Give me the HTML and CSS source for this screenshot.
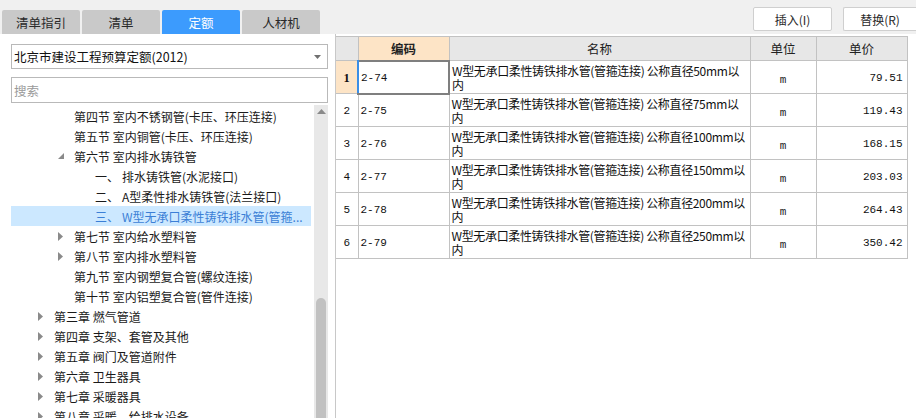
FILE: index.html
```html
<!DOCTYPE html>
<html lang="zh-CN">
<head>
<meta charset="utf-8">
<title>定额</title>
<link rel="stylesheet" href="styles.css">
</head>
<body>
<div class="app">
  <div class="tabs">
    <div class="tab">清单指引</div>
    <div class="tab">清单</div>
    <div class="tab active">定额</div>
    <div class="tab">人材机</div>
  </div>
  <div class="toolbar">
    <button class="btn">插入(I)</button>
    <button class="btn">替换(R)</button>
  </div>
  <div class="left">
    <div class="select">
      <span>北京市建设工程预算定额(2012)</span>
      <svg class="caret" width="7" height="4" viewBox="0 0 7 4"><path d="M0 0H7L3.5 4Z" fill="#707070"/></svg>
    </div>
    <div class="search">搜索</div>
    <div class="treewrap">
      <div class="tree">
        <div class="row l2"><span class="tw"></span>第四节 室内不锈钢管(卡压、环压连接)</div>
        <div class="row l2"><span class="tw"></span>第五节 室内铜管(卡压、环压连接)</div>
        <div class="row l2"><span class="tw"><svg width="6" height="6" viewBox="0 0 6 6"><path d="M6 0V6H0Z" fill="#8a8a8a"/></svg></span>第六节 室内排水铸铁管</div>
        <div class="row l3"><span class="num">一、</span>排水铸铁管(水泥接口)</div>
        <div class="row l3"><span class="num">二、</span>A型柔性排水铸铁管(法兰接口)</div>
        <div class="row l3 sel"><span class="num">三、</span>W型无承口柔性铸铁排水管(管箍...</div>
        <div class="row l2"><span class="tw"><svg width="5" height="9" viewBox="0 0 5 9"><path d="M0 0L5 4.5L0 9Z" fill="#8a8a8a"/></svg></span>第七节 室内给水塑料管</div>
        <div class="row l2"><span class="tw"><svg width="5" height="9" viewBox="0 0 5 9"><path d="M0 0L5 4.5L0 9Z" fill="#8a8a8a"/></svg></span>第八节 室内排水塑料管</div>
        <div class="row l2"><span class="tw"></span>第九节 室内钢塑复合管(螺纹连接)</div>
        <div class="row l2"><span class="tw"></span>第十节 室内铝塑复合管(管件连接)</div>
        <div class="row l1"><span class="tw"><svg width="5" height="9" viewBox="0 0 5 9"><path d="M0 0L5 4.5L0 9Z" fill="#8a8a8a"/></svg></span>第三章 燃气管道</div>
        <div class="row l1"><span class="tw"><svg width="5" height="9" viewBox="0 0 5 9"><path d="M0 0L5 4.5L0 9Z" fill="#8a8a8a"/></svg></span>第四章 支架、套管及其他</div>
        <div class="row l1"><span class="tw"><svg width="5" height="9" viewBox="0 0 5 9"><path d="M0 0L5 4.5L0 9Z" fill="#8a8a8a"/></svg></span>第五章 阀门及管道附件</div>
        <div class="row l1"><span class="tw"><svg width="5" height="9" viewBox="0 0 5 9"><path d="M0 0L5 4.5L0 9Z" fill="#8a8a8a"/></svg></span>第六章 卫生器具</div>
        <div class="row l1"><span class="tw"><svg width="5" height="9" viewBox="0 0 5 9"><path d="M0 0L5 4.5L0 9Z" fill="#8a8a8a"/></svg></span>第七章 采暖器具</div>
        <div class="row l1"><span class="tw"><svg width="5" height="9" viewBox="0 0 5 9"><path d="M0 0L5 4.5L0 9Z" fill="#8a8a8a"/></svg></span>第八章 采暖、给排水设备</div>
      </div>
      <div class="scrollbar">
        <svg class="up" width="9" height="5" viewBox="0 0 9 5"><path d="M0 5L4.5 0L9 5Z" fill="#8a8a8a"/></svg>
        <div class="thumb"></div>
      </div>
    </div>
  </div>
  <div class="right">
    <table class="grid">
      <colgroup>
        <col class="c-idx"><col class="c-code"><col class="c-name"><col class="c-unit"><col class="c-price">
      </colgroup>
      <thead>
        <tr><th class="idx"></th><th class="hl">编码</th><th>名称</th><th>单位</th><th>单价</th></tr>
      </thead>
      <tbody>
        <tr><td class="idx cur">1</td><td class="code focus">2-74</td><td class="name">W型无承口柔性铸铁排水管(管箍连接) 公称直径50mm以<br>内</td><td class="unit">m</td><td class="price">79.51</td></tr>
        <tr><td class="idx">2</td><td class="code">2-75</td><td class="name">W型无承口柔性铸铁排水管(管箍连接) 公称直径75mm以<br>内</td><td class="unit">m</td><td class="price">119.43</td></tr>
        <tr><td class="idx">3</td><td class="code">2-76</td><td class="name">W型无承口柔性铸铁排水管(管箍连接) 公称直径100mm以<br>内</td><td class="unit">m</td><td class="price">168.15</td></tr>
        <tr><td class="idx">4</td><td class="code">2-77</td><td class="name">W型无承口柔性铸铁排水管(管箍连接) 公称直径150mm以<br>内</td><td class="unit">m</td><td class="price">203.03</td></tr>
        <tr><td class="idx">5</td><td class="code">2-78</td><td class="name">W型无承口柔性铸铁排水管(管箍连接) 公称直径200mm以<br>内</td><td class="unit">m</td><td class="price">264.43</td></tr>
        <tr><td class="idx">6</td><td class="code">2-79</td><td class="name">W型无承口柔性铸铁排水管(管箍连接) 公称直径250mm以<br>内</td><td class="unit">m</td><td class="price">350.42</td></tr>
      </tbody>
    </table>
  </div>
</div>
</body>
</html>
```

FILE: styles.css
```css
* { box-sizing: border-box; }
html, body { margin: 0; padding: 0; }
body {
  width: 916px;
  height: 418px;
  overflow: hidden;
  background: #ffffff;
  font-family: "Noto Sans CJK SC", "Noto Sans", sans-serif;
  font-size: 12px;
  color: #1e1e1e;
}
.app {
  display: grid;
  grid-template-columns: 336px 580px;
  grid-template-rows: 34px 384px;
  width: 916px;
  height: 418px;
}
.tabs {
  background: #f0f0f0;
  display: flex;
  align-items: flex-end;
  gap: 2px;
  padding-left: 2px;
}
.tab {
  width: 78px;
  height: 24px;
  background: #c9c9c9;
  border-radius: 2px 2px 0 0;
  display: flex;
  align-items: center;
  justify-content: center;
  font-size: 12.5px;
  color: #2a2a2a;
}
.tab.active { background: #3c9bfd; color: #ffffff; }
.toolbar {
  background: #f0f0f0;
  display: flex;
  justify-content: flex-end;
  align-items: flex-start;
  gap: 11px;
  padding-top: 7px;
  margin-left: -1px;
}
.btn {
  width: 79px;
  height: 24px;
  background: #ffffff;
  border: 1px solid #cfcfcf;
  border-radius: 2px;
  font-family: "Noto Sans CJK SC", "Noto Sans", sans-serif;
  font-size: 12px;
  color: #2a2a2a;
  padding: 0;
}
.btn:last-child { width: 73px; border-right: none; border-radius: 2px 0 0 2px; }
.left {
  background: #ffffff;
  border-right: 1px solid #c8c8c8;
  display: flex;
  flex-direction: column;
  padding: 10px 7px 0 11px;
  min-height: 0;
}
.select {
  height: 25px;
  border: 1px solid #b9b9b9;
  display: flex;
  align-items: center;
  justify-content: space-between;
  padding: 0 6px 0 2px;
  font-size: 12.5px;
  color: #111;
}
.search {
  margin-top: 8px;
  height: 26px;
  border: 1px solid #b9b9b9;
  display: flex;
  align-items: center;
  padding-left: 2px;
  color: #9a9a9a;
  font-size: 12.5px;
}
.treewrap {
  margin-top: 2px;
  flex: 1;
  display: flex;
  min-height: 0;
  overflow: hidden;
}
.tree {
  flex: 1;
  padding-top: 1px;
  min-width: 0;
}
.row {
  height: 20px;
  display: flex;
  align-items: center;
  white-space: nowrap;
  color: #1a1a1a;
}
.row.l1 { padding-left: 27px; }
.row.l2 { padding-left: 47px; }
.row.l3 { padding-left: 84px; }
.tw {
  width: 16px;
  display: flex;
  align-items: center;
  justify-content: flex-start;
}
.num { width: 27px; }
.row.sel { background: #cce8ff; color: #3b7fd6; margin-right: 3px; }
.scrollbar {
  width: 14px;
  background: #e8e8e8;
  position: relative;
  display: flex;
  flex-direction: column;
  align-items: center;
}
.scrollbar .up { margin-top: 4px; }
.thumb {
  position: absolute;
  left: 2px;
  right: 2px;
  top: 193px;
  bottom: 0;
  background: #c1c1c1;
  border-radius: 5px 5px 0 0;
}
.right {
  background: #ffffff;
  padding-top: 2px;
}
.grid {
  border-collapse: collapse;
  table-layout: fixed;
  width: 571px;
  margin-left: 0;
  font-family: "Liberation Mono", "Noto Sans CJK SC", monospace;
  font-size: 11px;
  color: #111;
}
.c-idx { width: 22px; }
.c-code { width: 91px; }
.c-name { width: 301px; }
.c-unit { width: 66px; }
.c-price { width: 91px; }
.grid th {
  height: 24px;
  background: #e7e7e7;
  border: 1px solid #c2c2c2;
  border-left-color: #cfcfcf;
  font-family: "Noto Sans CJK SC", sans-serif;
  font-weight: normal;
  font-size: 12.5px;
  color: #222;
  padding: 0;
}
.grid th.idx { border-left: none; }
.grid th.hl { background: #fde4c6; font-weight: bold; }
.grid td {
  height: 33px;
  border: 1px solid #c2c2c2;
  padding: 2px 2px 0 2px;
  vertical-align: middle;
}
.grid td.idx { text-align: center; border-left: none; font-size: 11px; padding-left: 2px; }
.grid td.idx.cur { background: #fde4c6; font-family: "Liberation Serif", serif; font-weight: bold; font-size: 12.5px; }
.grid td.code { padding-left: 2px; }
.grid td.focus { border: 2px solid #7f7f7f; border-left: 2px solid #3b8ee6; }
.grid td.name {
  font-family: "Noto Sans CJK SC", sans-serif;
  font-size: 12px;
  line-height: 14px;
  white-space: nowrap;
  overflow: hidden;
  vertical-align: top;
  padding: 3px 0 0 2px;
  letter-spacing: -0.35px;
}
.grid td.unit { text-align: center; padding-top: 6px; font-weight: normal; color: #222; }
.grid td.price { text-align: right; padding-right: 4px; }
```
